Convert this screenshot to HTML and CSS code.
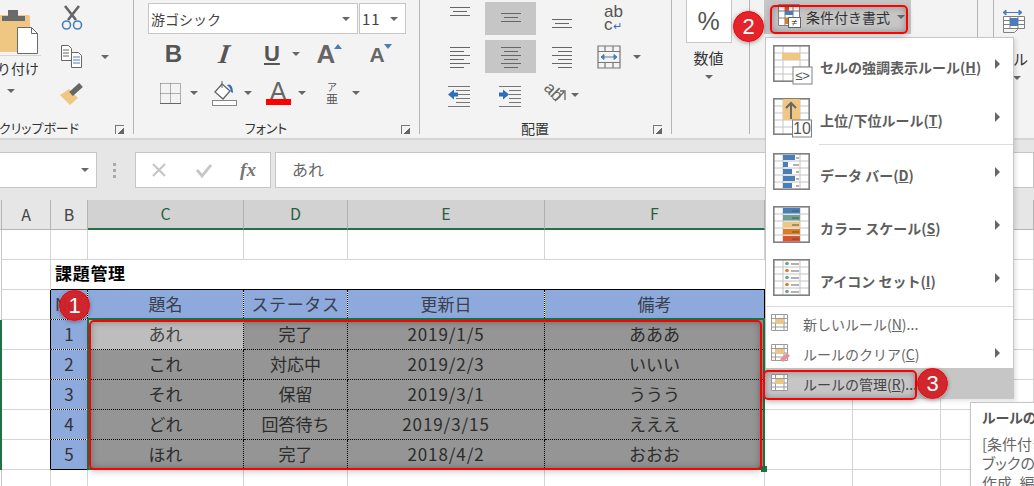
FILE: index.html
```html
<!DOCTYPE html>
<html lang="ja">
<head>
    <meta charset="UTF-8">
    <title>条件付き書式</title>
    <link rel="stylesheet" href="styles.css">
</head>
<body>
    <svg class="defs" width="0" height="0">
        <symbol id="tbl" viewBox="0 0 40 40">
            <path d="M1 1h35v35H1zM10 1v35M27 1v35M1 8h35M1 15h35M1 22h35M1 29h35" fill="none" stroke="#c4c4c4"/>
            <path d="M.75 .75h35.5v35.5H.75z" fill="none" stroke="#808080" stroke-width="1.5"/>
        </symbol>
        <symbol id="mini" viewBox="0 0 18 18">
            <path d="M.5 .5h16v16H.5zM4.5 .5v16M13 .5v16M.5 4.5h16M.5 9h16M.5 13h16" fill="#fff" stroke="#9a9a9a"/>
            <rect x="4" y="5" width="9" height="4.5" fill="#ecc682"/>
        </symbol>
    </svg>

    <!-- リボン -->
    <div class="ribbon">
        <div class="group group-clip">
            <div class="group-body clip-body">
                <div class="paste">
                    <svg width="60" height="50" viewBox="-19 0 60 50">
                        <rect x="-12" y="11" width="42" height="37" rx="2" fill="#efc782"/>
                        <path d="M2 17v-5h6V6h10v6h7v5z" fill="#6a6a6a"/>
                        <path d="M17.5 23.5h14l6 6v20h-20z" fill="#fff" stroke="#6a6a6a"/>
                        <path d="M31.5 23.5v6h6" fill="none" stroke="#6a6a6a"/>
                    </svg>
                    <div class="paste-line"></div>
                    <div class="paste-text">貼り付け</div>
                    <span class="caret"></span>
                </div>
                <div class="clip-tools">
                    <svg width="24" height="26" viewBox="0 0 24 26">
                        <path d="M5 1l11 14M19 1L8 15" stroke="#666" stroke-width="2.6" fill="none"/>
                        <circle cx="6.5" cy="20" r="4" fill="none" stroke="#4a7ebb" stroke-width="1.6"/>
                        <circle cx="17.5" cy="20" r="4" fill="none" stroke="#4a7ebb" stroke-width="1.6"/>
                    </svg>
                    <div class="copy-row">
                        <svg width="24" height="24" viewBox="0 0 24 24">
                            <path d="M1.5 .5h7l3 3v12h-10z" fill="#fff" stroke="#666"/>
                            <path d="M3 5h6M3 8h6M3 11h6" stroke="#666"/>
                            <path d="M11.5 7.5h7l3 3v12h-10z" fill="#fff" stroke="#666"/>
                            <path d="M13 12h7M13 15h7M13 18h7" stroke="#4a7ebb"/>
                        </svg>
                        <span class="caret"></span>
                    </div>
                    <svg width="24" height="23" viewBox="0 0 24 23">
                        <path d="M0 12l9-6 9 9-8 7z" fill="#efc782"/>
                        <path d="M11 11l10-9" stroke="#666" stroke-width="5.5"/>
                    </svg>
                </div>
            </div>
            <div class="group-label"><span></span><span>クリップボード</span><i class="launcher"></i></div>
        </div>

        <div class="group group-font">
            <div class="group-body">
                <div class="combos">
                    <div class="combo combo-face">游ゴシック<span class="caret"></span></div>
                    <div class="combo combo-size">11<span class="caret"></span></div>
                </div>
                <div class="font-row">
                    <div class="tool"><b class="glyph-b">B</b></div>
                    <div class="tool"><i class="glyph-i">I</i></div>
                    <div class="tool tool-u"><u class="glyph-u">U</u><span class="caret"></span></div>
                    <div class="tool">
                        <span class="glyph-a">A</span><span class="tri-up"></span>
                    </div>
                    <div class="tool">
                        <span class="glyph-a glyph-small">A</span><span class="tri-down"></span>
                    </div>
                </div>
                <div class="font-row font-row2">
                    <div class="tool2">
                        <svg width="28" height="24" viewBox="0 0 28 24">
                            <path d="M4.500 2.500h20M4.500 12.500h20M4.500 2.500v20M14.500 2.500v20M24.500 2.500v20" fill="none" stroke="#666" stroke-dasharray="1 1"/>
                            <path d="M4 22.500h21" stroke="#666"/>
                        </svg>
                        <span class="caret"></span>
                    </div>
                    <div class="tool2">
                        <svg width="28" height="26" viewBox="0 0 28 26">
                            <path d="M12 4L5 12l8 7 7-8z" fill="#fff" stroke="#666" stroke-width="1.3"/>
                            <path d="M12 1v7" stroke="#666"/>
                            <path d="M17 5c4-2 6 2 6 8l-2-1-1-4z" fill="#2f6fb5"/>
                            <rect x="2.500" y="20.500" width="24" height="5" fill="#fff" stroke="#888"/>
                        </svg>
                        <span class="caret"></span>
                    </div>
                    <div class="tool2">
                        <div class="font-color"><span>A</span><div class="color-bar"></div></div>
                        <span class="caret"></span>
                    </div>
                    <div class="tool2">
                        <div class="phonetic"><span>ア</span><span>亜</span></div>
                        <span class="caret"></span>
                    </div>
                </div>
            </div>
            <div class="group-label"><span></span><span>フォント</span><i class="launcher"></i></div>
        </div>

        <div class="group group-align">
            <div class="group-body align-grid">
                <div class="al"><svg width="20" height="33"><path d="M0 5.500h20M3 9.500h14M0 13.500h20" stroke="#666"/></svg></div>
                <div class="al al-on"><svg width="20" height="33"><path d="M0 11.500h20M3 15.500h14M0 19.500h20" stroke="#666"/></svg></div>
                <div class="al"><svg width="20" height="33"><path d="M0 17.500h20M3 21.500h14M0 25.500h20" stroke="#666"/></svg></div>
                <div class="al al-wrap"><span>ab</span><span>c<em>↵</em></span></div>
                <div class="al"><svg width="20" height="24"><path d="M0 2.500h20M0 6.500h14M0 10.500h20M0 14.500h14M0 18.500h20M0 22.500h14" stroke="#666"/></svg></div>
                <div class="al al-on"><svg width="20" height="24"><path d="M0 2.500h20M3 6.500h14M0 10.500h20M3 14.500h14M0 18.500h20M3 22.500h14" stroke="#666"/></svg></div>
                <div class="al"><svg width="20" height="24"><path d="M0 2.500h20M6 6.500h14M0 10.500h20M6 14.500h14M0 18.500h20M6 22.500h14" stroke="#666"/></svg></div>
                <div class="al al-merge">
                    <svg width="24" height="24">
                        <path d="M1 1h22v22H1zM1 6.500h22M1 17.500h22M8 1v5.500M16 1v5.500M8 17.500V23M16 17.500V23" fill="none" stroke="#777" stroke-width="1.200"/>
                        <path d="M4 12h16M4 12l3-2.500v5zM20 12l-3-2.500v5z" stroke="#4a7ebb" fill="#4a7ebb"/>
                    </svg>
                    <span class="caret"></span>
                </div>
                <div class="al">
                    <svg width="24" height="24">
                        <path d="M0 3.500h22M8 7.500h14M8 11.500h14M8 15.500h14M8 19.500h14M0 23.500h22" stroke="#777"/>
                        <path d="M0 11.500l6-5v3h4v4H6v3z" fill="#2f6fb5"/>
                    </svg>
                </div>
                <div class="al">
                    <svg width="24" height="24">
                        <path d="M0 3.500h22M10 7.500h12M10 11.500h12M10 15.500h12M10 19.500h12M0 23.500h22" stroke="#777"/>
                        <path d="M10 11.500l-6-5v3H0v4h4v3z" fill="#2f6fb5"/>
                    </svg>
                </div>
                <div class="al al-rotate">
                    <span class="rot-text">ab</span>
                    <svg width="12" height="14"><path d="M0 13L9 4M5 3h5v9" fill="none" stroke="#666" stroke-width="1.300"/></svg>
                    <span class="caret"></span>
                </div>
            </div>
            <div class="group-label"><span></span><span>配置</span><i class="launcher"></i></div>
        </div>

        <div class="group group-num">
            <div class="percent">%</div>
            <div class="num-text">数値</div>
            <span class="caret"></span>
        </div>

        <div class="group group-style">
            <div class="cf-btn">
                <svg width="26" height="26" viewBox="0 0 26 26">
                    <path d="M1.500 .500h21v21h-21zM8 .5v21M16 .5v21M1.500 7h21M1.500 14h21" fill="#fff" stroke="#808080"/>
                    <rect x="8" y="1" width="4" height="6" fill="#d9532c"/>
                    <rect x="8" y="7" width="8" height="4" fill="#4a7ebb"/>
                    <rect x="8" y="14" width="4" height="6" fill="#e07a1f"/>
                    <rect x="11.500" y="13.500" width="12" height="10" fill="#fff" stroke="#666"/>
                    <text x="17.500" y="22" class="cf-ne">≠</text>
                </svg>
                <span>条件付き書式</span>
                <span class="caret"></span>
            </div>
        </div>
        <div class="group group-gap"></div>
        <div class="group group-last">
            <svg width="24" height="24" viewBox="0 0 24 24">
                <path d="M1 3.500h19M1 3.500l3-2.500v5zM20 3.500l-3-2.500v5z" stroke="#4a7ebb" fill="#4a7ebb"/>
                <path d="M1.500 7.500h21v12h-21zM8 7.500v12M16 7.500v12M1.500 11.500h21M1.500 15.500h21" fill="#fff" stroke="#808080"/>
                <rect x="8" y="9" width="8" height="8" fill="#4a7ebb"/>
                <path d="M1.500 19.500v4h11l4-4" fill="none" stroke="#808080"/>
            </svg>
            <div class="last-text">ル</div>
            <span class="caret"></span>
        </div>
    </div>

    <!-- 数式バー -->
    <div class="formula">
        <div class="name-box"><span class="caret"></span></div>
        <div class="grip"><i></i><i></i><i></i></div>
        <div class="fx-box">
            <svg width="16" height="16"><path d="M2 2l12 12M14 2L2 14" stroke="#c6c6c6" stroke-width="2.200"/></svg>
            <svg width="18" height="16"><path d="M2 8l5 6L16 3" fill="none" stroke="#c6c6c6" stroke-width="2.800"/></svg>
            <span class="fx">fx</span>
        </div>
        <div class="formula-input">あれ</div>
    </div>

    <!-- シート -->
    <div class="sheet">
        <div class="c hd"></div><div class="c hd">A</div><div class="c hd">B</div><div class="c hd hd-on">C</div><div class="c hd hd-on">D</div><div class="c hd hd-on">E</div><div class="c hd hd-on">F</div><div class="c hd"></div><div class="c hd"></div><div class="c hd"></div>

        <div class="c rh"></div><div class="c"></div><div class="c"></div><div class="c"></div><div class="c"></div><div class="c"></div><div class="c"></div><div class="c"></div><div class="c"></div><div class="c"></div>

        <div class="c rh"></div><div class="c"></div><div class="c title">課題管理</div><div class="c"></div><div class="c"></div><div class="c"></div>

        <div class="c rh"></div><div class="c to-black"></div><div class="c th th-no">No</div><div class="c th">題名</div><div class="c th th-wide">ステータス</div><div class="c th">更新日</div><div class="c th th-last">備考</div><div class="c"></div><div class="c"></div><div class="c"></div>

        <div class="c rh rh-on"></div><div class="c to-black"></div><div class="c no">1</div><div class="c td td-active">あれ</div><div class="c td">完了</div><div class="c td num">2019/1/5</div><div class="c td">あああ</div><div class="c"></div><div class="c"></div><div class="c"></div>

        <div class="c rh rh-on"></div><div class="c to-black"></div><div class="c no">2</div><div class="c td">これ</div><div class="c td">対応中</div><div class="c td num">2019/2/3</div><div class="c td">いいい</div><div class="c"></div><div class="c"></div><div class="c"></div>

        <div class="c rh rh-on"></div><div class="c to-black"></div><div class="c no">3</div><div class="c td">それ</div><div class="c td">保留</div><div class="c td num">2019/3/1</div><div class="c td">ううう</div><div class="c"></div><div class="c"></div><div class="c"></div>

        <div class="c rh rh-on"></div><div class="c to-black"></div><div class="c no">4</div><div class="c td">どれ</div><div class="c td">回答待ち</div><div class="c td num">2019/3/15</div><div class="c td">えええ</div><div class="c"></div><div class="c"></div><div class="c"></div>

        <div class="c rh rh-on"></div><div class="c to-black"></div><div class="c no no-last">5</div><div class="c td">ほれ</div><div class="c td">完了</div><div class="c td num">2018/4/2</div><div class="c td">おおお</div><div class="c"></div><div class="c"></div><div class="c"></div>

        <div class="c rh"></div><div class="c"></div><div class="c"></div><div class="c"></div><div class="c"></div><div class="c"></div><div class="c"></div><div class="c"></div><div class="c"></div><div class="c"></div>
    </div>

    <!-- 選択範囲 -->
    <div class="selection"><i class="handle"></i></div>

    <!-- メニュー -->
    <div class="menu">
        <div class="item-big">
            <svg width="40" height="40" viewBox="0 0 40 40">
                <use href="#tbl"/>
                <rect x="9" y="8" width="18" height="7" fill="#efc782"/>
                <rect x="20" y="22" width="19" height="17" fill="#fff" stroke="#808080"/>
                <text x="29.500" y="35" class="ic-text">≤&gt;</text>
            </svg>
            <span class="item-text">セルの強調表示ルール(<u>H</u>)</span><span class="sub"></span>
        </div>
        <div class="item-big">
            <svg width="40" height="40" viewBox="0 0 40 40">
                <use href="#tbl"/>
                <rect x="10" y="1" width="17" height="21" fill="#efc782"/>
                <path d="M18 21V5M13 10l5-5 5 5" fill="none" stroke="#666" stroke-width="2"/>
                <rect x="19.500" y="22" width="19" height="17" fill="#fff" stroke="#808080"/>
                <text x="29" y="36" class="ic-ten">10</text>
            </svg>
            <span class="item-text">上位/下位ルール(<u>T</u>)</span><span class="sub"></span>
        </div>
        <div class="sep sep-short"></div>
        <div class="item-big">
            <svg width="40" height="40" viewBox="0 0 40 40">
                <use href="#tbl"/>
                <path d="M10 2h12v5H10zM10 9h5v5h-5zM10 16h9v5h-9zM10 23h12v5H10zM10 30h9v5h-9z" fill="#4a7ebb"/>
                <path d="M23 5h3M20 12h6M23 19h3M23 26h3M23 33h3" stroke="#666"/>
            </svg>
            <span class="item-text">データ バー(<u>D</u>)</span><span class="sub"></span>
        </div>
        <div class="item-big">
            <svg width="40" height="40" viewBox="0 0 40 40">
                <use href="#tbl"/>
                <rect x="10" y="2" width="17" height="5.500" fill="#4a7ebb"/>
                <rect x="10" y="9" width="17" height="5.500" fill="#6f9f91"/>
                <rect x="10" y="16" width="17" height="5.500" fill="#efc782"/>
                <rect x="10" y="23" width="17" height="5.500" fill="#e07a1f"/>
                <rect x="10" y="30" width="17" height="5.500" fill="#d9532c"/>
                <path d="M19 5h7M19 12h7M19 19h7M19 26h7M19 33h7" stroke="#555"/>
            </svg>
            <span class="item-text">カラー スケール(<u>S</u>)</span><span class="sub"></span>
        </div>
        <div class="item-big">
            <svg width="40" height="40" viewBox="0 0 40 40">
                <use href="#tbl"/>
                <circle cx="14" cy="4.500" r="1.800" fill="#6f9f91"/>
                <circle cx="14" cy="11.500" r="1.800" fill="#e07a1f"/>
                <circle cx="14" cy="18.500" r="1.800" fill="#6f9f91"/>
                <circle cx="14" cy="25.500" r="1.800" fill="#e07a1f"/>
                <circle cx="14" cy="32.500" r="1.800" fill="#6f9f91"/>
                <path d="M18 5h8M18 12h8M18 19h8M18 26h8M18 33h8" stroke="#666"/>
            </svg>
            <span class="item-text">アイコン セット(<u>I</u>)</span><span class="sub"></span>
        </div>
        <div class="sep sep-long"></div>
        <div class="item-small">
            <svg width="18" height="18"><use href="#mini"/></svg>
            <span>新しいルール(<u>N</u>)...</span>
        </div>
        <div class="item-small">
            <svg class="ic-clear" width="18" height="18">
                <use href="#mini" width="18" height="18"/>
                <path d="M9 15l7-6 3 3-7 6z" fill="#e8909a"/>
            </svg>
            <span>ルールのクリア(<u>C</u>)</span><span class="sub"></span>
        </div>
        <div class="item-small item-hover">
            <svg width="18" height="18"><use href="#mini"/></svg>
            <span>ルールの管理(<u>R</u>)...</span>
        </div>
    </div>

    <!-- ツールチップ -->
    <div class="tooltip">
        <div class="tip-title">ルールの管理</div>
        <div>[条件付き書式</div>
        <div>ブックの条件</div>
        <div>作成、編集</div>
    </div>

    <!-- 注釈 -->
    <div class="mark mark-data"></div>
    <div class="mark mark-btn"></div>
    <div class="mark mark-manage"></div>
    <div class="badge badge-1">1</div>
    <div class="badge badge-2">2</div>
    <div class="badge badge-3">3</div>
</body>
</html>
```

FILE: styles.css
```css
/* Excel リボン + シート */
* {
    box-sizing: border-box;
}
body {
    margin: 0;
    width: 1034px;
    height: 486px;
    overflow: hidden;
    position: relative;
    background-color: #fff;
    font-family: "Noto Sans CJK JP", "Liberation Sans", sans-serif;
    font-size: 14px;
    color: #444;
}
svg {
    display: block;
    flex: none;
}
.defs {
    position: absolute;
}
.caret {
    display: inline-block;
    flex: none;
    width: 0;
    height: 0;
    border-left: 4px solid transparent;
    border-right: 4px solid transparent;
    border-top: 4px solid #666;
}

/* ribbon */
.ribbon {
    display: flex;
    height: 140px;
    background-color: #f3f3f3;
    border-bottom: 2px solid #d4d4d4;
    padding-bottom: 4px;
    overflow: hidden;
}
.group {
    display: flex;
    flex-direction: column;
    flex: none;
    border-right: 1px solid #b4b4b4;
}
.group-body {
    flex: 1;
}
.group-label {
    display: grid;
    grid-template-columns: 1fr auto 1fr;
    align-items: center;
    height: 22px;
    padding: 10px 21px 0 0;
    color: #333;
    font-size: 13px;
    font-feature-settings: "palt";
    line-height: 12px;
}
.launcher {
    justify-self: end;
    width: 9px;
    height: 9px;
    margin: 3px -12px 0 0;
    border-left: 1px solid #777;
    border-top: 1px solid #777;
    background: linear-gradient(135deg, transparent 60%, #666 60%);
}

/* clipboard */
.group-clip {
    width: 189px;
    margin-left: -55px;
}
.group-clip .group-label {
    padding-right: 0;
}
.group-clip .launcher {
    margin-right: 9px;
}
.clip-body {
    display: flex;
    padding-left: 36px;
}
.paste {
    display: flex;
    flex-direction: column;
    align-items: center;
    width: 60px;
    padding-top: 4px;
}
.paste .caret {
    margin-top: 11px;
}
.paste-line {
    width: 60px;
    height: 1px;
    margin-top: 1px;
    background-color: #d4d4d4;
}
.paste-text {
    margin-top: 2px;
    line-height: 20px;
    color: #333;
}
.clip-tools {
    display: flex;
    flex-direction: column;
    gap: 14px;
    padding: 5px 0 0 19px;
}
.copy-row {
    display: flex;
    align-items: center;
    gap: 17px;
}

/* font */
.group-font {
    width: 286px;
}
.group-font .group-body {
    padding: 3px 0 0 14px;
}
.combos {
    display: flex;
    gap: 1px;
}
.combo {
    display: flex;
    align-items: center;
    justify-content: space-between;
    height: 31px;
    padding: 0 7px 0 2px;
    background-color: #fff;
    border: 1px solid #c6c6c6;
    color: #444;
}
.combo-face {
    width: 210px;
}
.combo-size {
    width: 47px;
    font-size: 15px;
    letter-spacing: 1px;
}
.font-row {
    display: grid;
    grid-template-columns: 51px 51px 54px 51px 51px;
    height: 34px;
    margin-top: 3px;
}
.font-row2 {
    grid-template-columns: repeat(4, 54px);
    margin-top: 5px;
}
.tool {
    position: relative;
    display: flex;
    align-items: center;
    justify-content: center;
    color: #555;
    font-family: "Liberation Sans", sans-serif;
    line-height: 1;
}
.glyph-b {
    font-size: 24px;
}
.glyph-i {
    font-family: "Liberation Serif", serif;
    font-size: 27px;
    font-weight: bold;
    transform: skewX(-8deg);
}
.glyph-u {
    font-size: 22px;
    font-weight: bold;
}
.glyph-a {
    font-size: 26px;
    font-weight: bold;
    color: #666;
}
.glyph-small {
    font-size: 21px;
}
.tool-u {
    justify-content: flex-start;
    gap: 12px;
    padding-left: 14px;
}
.tri-up, .tri-down {
    width: 0;
    height: 0;
    margin: -16px 0 0 -1px;
    border-left: 4px solid transparent;
    border-right: 4px solid transparent;
    border-bottom: 5px solid #4a7ebb;
}
.tri-down {
    border-bottom: none;
    border-top: 5px solid #4a7ebb;
}
.tool2 {
    display: flex;
    align-items: center;
    padding-left: 8px;
    gap: 6px;
}
.font-color, .phonetic {
    display: flex;
    flex-direction: column;
    align-items: center;
    width: 28px;
    line-height: 1;
}
.font-color span {
    font-family: "Liberation Sans", sans-serif;
    font-size: 25px;
    color: #666;
    height: 20px;
    margin-top: -3px;
}
.color-bar {
    width: 25px;
    height: 6px;
    background-color: #f00;
}
.phonetic span {
    font-size: 10px;
    color: #555;
}
.phonetic span + span {
    margin-top: 1px;
    font-size: 12px;
}

/* alignment */
.group-align {
    width: 252px;
}
.group-align .group-label {
    font-size: 14px;
}
.align-grid {
    display: grid;
    grid-template-columns: repeat(4, 51px);
    grid-template-rows: 33px 33px 33px;
    row-gap: 5px;
    padding: 2px 0 0 14px;
}
.al {
    display: flex;
    align-items: center;
    justify-content: center;
}
.al-on {
    background-color: #c6c6c6;
}
.al-wrap {
    flex-direction: column;
    align-items: flex-start;
    padding-left: 17px;
    line-height: 13px;
    font-size: 17px;
    font-family: "Liberation Sans", sans-serif;
    color: #555;
}
.al-wrap em {
    font-style: normal;
    font-size: 11px;
    color: #2f6fb5;
}
.al-merge {
    justify-content: flex-start;
    gap: 12px;
    padding-left: 10px;
    margin-right: -16px;
}
.al-rotate {
    gap: 0;
    position: relative;
}
.al-rotate .caret {
    margin-left: 4px;
}
.rot-text {
    display: block;
    transform: rotate(45deg);
    font-family: "Liberation Sans", sans-serif;
    font-size: 17px;
    line-height: 1;
    color: #666;
    margin: -6px -8px 0 0;
}

/* number */
.group-num {
    width: 78px;
    align-items: center;
    padding: 0 4px 0 0;
}
.percent {
    width: 46px;
    height: 44px;
    margin-top: -1px;
    background-color: #fff;
    border: 1px solid #c6c6c6;
    text-align: center;
    font-family: "Liberation Sans", sans-serif;
    font-size: 25px;
    line-height: 42px;
    color: #555;
}
.num-text {
    margin-top: 4px;
    line-height: 22px;
    font-size: 15px;
    color: #333;
}
.group-num .caret {
    margin-top: 6px;
}

/* styles */
.group-style {
    width: 228px;
    padding-left: 14px;
}
.cf-btn {
    display: flex;
    align-items: center;
    width: 147px;
    height: 34px;
    padding: 0 8px 0 13px;
    gap: 3px;
    background-color: #c6c6c6;
    color: #333;
    white-space: nowrap;
}
.cf-btn .caret {
    margin-left: 4px;
}
.cf-ne {
    font-family: "Liberation Sans", sans-serif;
    font-size: 10px;
    text-anchor: middle;
    fill: #444;
}
.group-gap {
    width: 16px;
}
.group-last {
    flex: 1;
    border-right: none;
    align-items: center;
    padding: 9px 0 0 0;
}
.last-text {
    align-self: flex-end;
    margin: 15px 6px 0 0;
    line-height: 22px;
    font-size: 15px;
    color: #333;
}
.group-last .caret {
    align-self: flex-start;
    margin: 6px 0 0 19px;
}

/* formula bar */
.formula {
    display: flex;
    align-items: flex-start;
    height: 60px;
    padding-top: 12px;
    background-color: #e6e6e6;
}
.name-box, .fx-box, .formula-input {
    height: 36px;
    background-color: #fff;
    border: 1px solid #c6c6c6;
}
.name-box {
    display: flex;
    align-items: center;
    justify-content: flex-end;
    width: 98px;
    margin-left: -1px;
    padding-right: 7px;
}
.grip {
    display: flex;
    flex-direction: column;
    gap: 3px;
    width: 38px;
    padding: 11px 0 0 16px;
}
.grip i {
    width: 3px;
    height: 3px;
    background-color: #aaa;
}
.fx-box {
    display: grid;
    grid-template-columns: 45px 45px 44px;
    justify-items: center;
    align-items: center;
    width: 136px;
}
.fx {
    font-family: "Liberation Serif", serif;
    font-style: italic;
    font-weight: bold;
    font-size: 19px;
    color: #777;
}
.formula-input {
    flex: 1;
    margin-left: 4px;
    padding-left: 16px;
    font-size: 16px;
    line-height: 33px;
    color: #666;
}

/* sheet */
.sheet {
    display: grid;
    grid-template-columns: 2px 49px 37px 156px 104px 197px 220px 88px 88px 93px;
    grid-auto-rows: 30px;
}
.c {
    display: flex;
    align-items: center;
    justify-content: center;
    padding-bottom: 2px;
    border-right: 1px solid #d4d4d4;
    border-bottom: 1px solid #d4d4d4;
    font-size: 17px;
    line-height: 1;
    white-space: nowrap;
    color: #333;
    background-clip: padding-box;
}
.hd {
    background-color: #e6e6e6;
    border-right-color: #b4b4b4;
    border-bottom-color: #b4b4b4;
    color: #444;
    font-size: 16px;
}
.hd-on {
    background-color: #d2d2d2;
    border-right-color: #b0b0b0;
    border-bottom: 2px solid #217346;
    color: #2a5e44;
}
.rh {
    border-right-color: #c6c6c6;
    border-bottom: none;
}
.rh-on {
    background-color: #217346;
    background-clip: border-box;
    border-right: none;
}
.title {
    grid-column: span 5;
    justify-content: flex-start;
    padding: 0 0 4px 4px;
    font-weight: bold;
    letter-spacing: 0.7px;
    color: #000;
    border-right: none;
    border-bottom: 1px solid #000;
}
.to-black {
    border-right: 1px solid #000;
}
.th, .no {
    background-color: #8ea9db;
    border-right: 1px dotted #000;
    border-bottom: 1px dotted #000;
}
.th {
    color: #3a3f4c;
}
.th-no {
    justify-content: flex-start;
    padding-left: 4px;
}
.th-wide {
    letter-spacing: 0.6px;
}
.th-last {
    border-right: 1px solid #000;
}
.no-last {
    border-bottom: 1px solid #000;
}
.td {
    background-color: #959595;
    background-clip: border-box;
    border-right: 1px dotted #000;
    border-bottom: 1px dotted #000;
    color: #2c2c2c;
}
.td-active {
    background-color: #bdbdbd;
    color: #444;
}
.num {
    letter-spacing: 0.9px;
}

/* selection */
.selection {
    position: absolute;
    left: 87px;
    top: 318px;
    width: 678px;
    height: 152px;
    border: 2px solid #217346;
}
.handle {
    position: absolute;
    right: -4px;
    bottom: -4px;
    width: 6px;
    height: 6px;
    background-color: #217346;
}

/* menu */
.menu {
    position: absolute;
    left: 765px;
    top: 37px;
    width: 249px;
    height: 362px;
    background-color: #fff;
    border: 1px solid #c6c6c6;
    box-shadow: 2px 2px 4px rgba(0, 0, 0, 0.12);
}
.item-big {
    display: flex;
    align-items: center;
    height: 53px;
    padding: 0 13px 0 7px;
}
.item-text {
    flex: 1;
    margin: 5px 0 0 7px;
    font-weight: bold;
    color: #5e5e5e;
}
.sub {
    width: 0;
    height: 0;
    border-top: 5px solid transparent;
    border-bottom: 5px solid transparent;
    border-left: 5px solid #666;
}
.item-big .sub {
    margin-top: -1px;
}
.ic-text, .ic-ten {
    font-family: "Liberation Sans", sans-serif;
    text-anchor: middle;
    fill: #555;
}
.ic-text {
    font-size: 13px;
}
.ic-ten {
    font-size: 16px;
}
.ic-clear {
    overflow: visible;
}
.sep {
    height: 1px;
    margin-bottom: 1px;
    background-color: #dcdcdc;
}
.sep-short {
    margin-left: 53px;
}
.sep-long {
    margin: 1px 0 1px 0;
}
.item-small {
    display: flex;
    align-items: center;
    height: 30px;
    padding: 0 13px 0 5px;
    color: #666;
}
.item-small span:first-of-type {
    flex: 1;
    margin-left: 14px;
}
.item-small svg + span {
    margin-top: 1px;
}
.item-hover {
    background-color: #c6c6c6;
    color: #444;
}

/* tooltip */
.tooltip {
    position: absolute;
    left: 970px;
    top: 402px;
    width: 180px;
    height: 100px;
    padding: 5px 0 0 11px;
    background-color: #fff;
    border: 1px solid #c6c6c6;
    box-shadow: 1px 1px 3px rgba(0, 0, 0, 0.15);
    font-size: 15px;
    font-feature-settings: "palt";
    line-height: 19.5px;
    color: #666;
    white-space: nowrap;
}
.tip-title {
    margin-bottom: 6px;
    font-size: 14px;
    font-weight: bold;
    color: #555;
}

/* annotations */
.mark {
    position: absolute;
    border: 2px solid #f00;
    border-radius: 5px;
    box-shadow: inset 0 0 7px rgba(0, 0, 0, 0.3), 0 2px 6px rgba(0, 0, 0, 0.2);
}
.mark-data {
    left: 89px;
    top: 320px;
    width: 673px;
    height: 150px;
}
.mark-btn {
    left: 770px;
    top: 5px;
    width: 138px;
    height: 29px;
}
.mark-manage {
    left: 763px;
    top: 370px;
    width: 154px;
    height: 30px;
}
.badge {
    position: absolute;
    width: 31px;
    height: 31px;
    border-radius: 50%;
    text-align: center;
    font-family: "Liberation Sans", sans-serif;
    font-size: 22px;
    line-height: 29px;
    color: #fff;
    background-color: rgba(207, 32, 39, 0.96);
    border: 1px solid #f00;
    box-shadow: 0 1px 4px rgba(0, 0, 0, 0.35);
}
.badge-1 {
    left: 59px;
    top: 290px;
}
.badge-2 {
    left: 733px;
    top: 11px;
    background-color: #e3242b;
}
.badge-3 {
    left: 917px;
    top: 368px;
}
```
